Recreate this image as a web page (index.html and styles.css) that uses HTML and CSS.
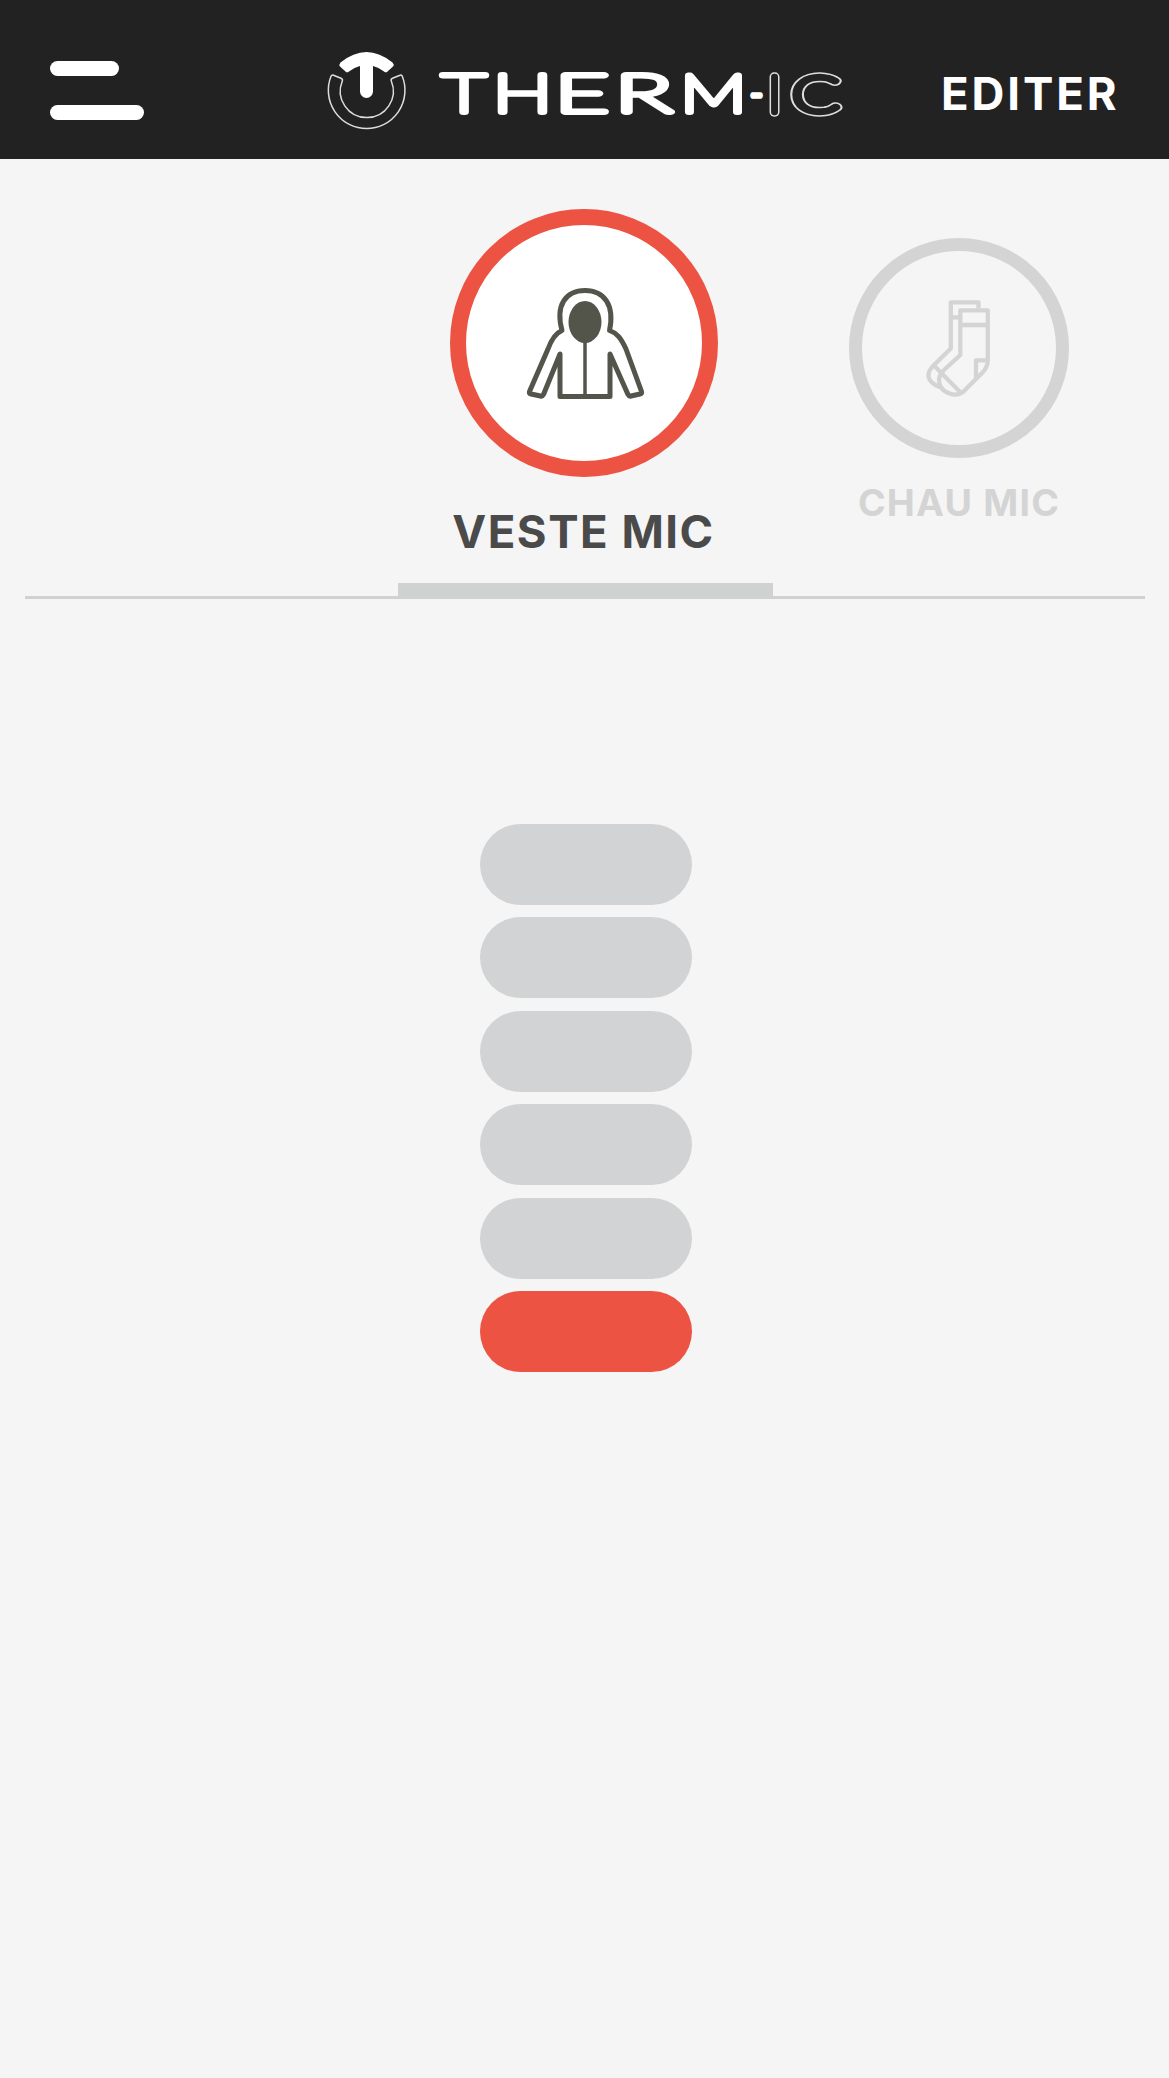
FILE: index.html
```html
<!DOCTYPE html>
<html lang="fr">
<head>
<meta charset="utf-8">
<title>Therm-ic</title>
<link rel="stylesheet" href="styles.css">
</head>
<body>
<header class="topbar">
  <button class="menu" aria-label="Menu"><span class="menu-line short"></span><span class="menu-line"></span></button>
  <svg class="logo" viewBox="320 40 530 100" role="img" aria-label="Therm-ic">
    <path class="emblem-fill" d="M340.5 62.500Q366.500 41.500 392.500 62.500Q394.500 64.500 393 66.500L387.500 71.500Q386 73.200 384 71.500Q379 67.500 373 66V91.500A6.500 6.500 0 0 1 360 91.500V66Q354 67.500 349 71.500Q347 73.200 345.500 71.500L340 66.500Q338.700 64.500 340.500 62.500Z"/>
    <path class="emblem-line" d="M331 76.300Q331.800 74.600 333.500 75.300L341 78.300Q343 79.200 342.300 81A26.500 26.500 0 1 0 391.300 81Q390.500 79.200 392.500 78.300L400 75.300Q401.600 74.600 402.300 76.300A38.300 38.300 0 1 1 331 76.300Z"/>
    <g class="word">
      <text x="442" y="112.300" textLength="44" lengthAdjust="spacingAndGlyphs">T</text>
      <text x="493" y="112.300" textLength="59" lengthAdjust="spacingAndGlyphs">H</text>
      <text x="555" y="112.300" textLength="54" lengthAdjust="spacingAndGlyphs">E</text>
      <text x="615" y="112.300" textLength="57" lengthAdjust="spacingAndGlyphs">R</text>
      <text x="680.500" y="112.300" textLength="66" lengthAdjust="spacingAndGlyphs">M</text>
      <text x="749.500" y="111" textLength="14" lengthAdjust="spacingAndGlyphs">-</text>
    </g>
    <g class="word outer">
      <g id="ic">
        <text x="768.500" y="111.500">I</text>
        <text x="792" y="111.500" textLength="47" lengthAdjust="spacingAndGlyphs">C</text>
      </g>
    </g>
    <use class="word inner" href="#ic"/>
  </svg>
  <a class="edit">EDITER</a>
</header>
<nav class="devices">
  <div class="device active">
    <div class="ring">
      <svg viewBox="450 209 268 268" class="jacket">
        <path d="M562 330.500C555 305 566 290.500 585 290.500S615 305 609.500 330.500C617 333 621 338 626 349L641.500 391.500Q642 393.500 640 394L631 396Q629 396.500 628 394.500L610 354V396.500H560V354L543.500 394.500Q542.500 396.500 540.500 396L531 394Q529 393.500 529.500 391.500L548 349C552 338 556 333 562 330.500Z"/>
        <path class="zip" d="M585 340V396"/>
        <ellipse cx="585" cy="322" rx="16.500" ry="21"/>
      </svg>
    </div>
    <span class="label">VESTE MIC</span>
  </div>
  <div class="device">
    <div class="ring">
      <svg viewBox="848.500 237.500 220 220" class="socks">
        <path d="M978 308V301.800H950.300V348L933 365C925 373 926 381 939 386.500M950.300 316.800H960"/>
        <path d="M959.800 309.800H987.300V360Q987 367 982 372L963 391C954 398 938 391.500 938.500 379Q939 374 943.500 369.500L959.800 354.500ZM959.800 324.500H987M987 359.800H975.500V378M932.500 364L961 393"/>
      </svg>
    </div>
    <span class="label">CHAU MIC</span>
  </div>
</nav>
<div class="track"><div class="thumb"></div></div>
<main class="levels">
  <span class="level"></span><span class="level"></span><span class="level"></span><span class="level"></span><span class="level"></span><span class="level on"></span>
</main>
</body>
</html>
```
FILE: styles.css
```css
* { box-sizing: border-box; }
body { margin: 0; min-height: 2078px; background: #f5f5f5; font-family: Inter, "Liberation Sans", sans-serif; font-weight: 700; }
.topbar { display: flex; height: 159px; background: #222; padding: 40px 50px 0; }
.menu { width: 94px; height: 59px; margin-top: 21px; padding: 0; border: 0; background: none; display: flex; flex-direction: column; justify-content: space-between; align-items: flex-start; flex: none; }
.menu-line { width: 94px; height: 15px; border-radius: 8px; background: #fff; }
.menu-line.short { width: 69px; }
.logo { width: 530px; height: 100px; margin-left: 176px; flex: none; }
.emblem-fill { fill: #fff; }
.emblem-line { fill: none; stroke: #ddd; stroke-width: 1.5; }
.word { font-family: Lato, sans-serif; font-size: 52px; font-weight: 100; fill: #fff; stroke: #fff; stroke-width: 5.8px; stroke-linejoin: round; }
.word.outer { font-size: 49.5px; fill: #ddd; stroke: #ddd; stroke-width: 9.3px; }
.word.inner { font-size: 49.5px; fill: #222; stroke: #222; stroke-width: 6.3px; }
.edit { margin: 24px 0 0 91px; color: #fff; font-size: 45.5px; line-height: 59px; letter-spacing: 2.9px; white-space: nowrap; }
.devices { display: grid; grid-template-columns: 398px 373px 376px; height: 424px; }
.device { display: flex; flex-direction: column; align-items: center; grid-column: 3; grid-row: 1; padding-top: 79px; color: #d3d4d3; }
.device.active { grid-column: 2; padding-top: 50px; margin-left: -1px; margin-right: 1px; color: #4a4a4a; }
.ring { width: 220px; height: 220px; border-radius: 50%; border: 13px solid #d3d4d3; flex: none; }
.active .ring { width: 268px; height: 268px; border: 16px solid #ec5342; background: #fff; }
.ring svg { display: block; width: 220px; height: 220px; margin: -13px; fill: none; stroke: #d3d4d3; stroke-width: 4.3; stroke-linejoin: round; }
.active .ring svg { width: 268px; height: 268px; margin: -16px; stroke: #53544a; stroke-width: 5; }
.jacket ellipse { fill: #53544a; stroke: none; }
.jacket .zip { stroke-width: 3.5; }
.label { margin-top: 20px; font-size: 37.5px; line-height: 50px; letter-spacing: 1.2px; white-space: nowrap; }
.active .label { margin-top: 26px; font-size: 45.5px; line-height: 58px; letter-spacing: 1.5px; }
.track { height: 16px; margin: 0 24px 0 25px; border-bottom: 3px solid #d0d2d2; }
.thumb { width: 375px; height: 13px; margin-left: 373px; background: #d0d2d2; }
.levels { display: flex; flex-direction: column; align-items: center; gap: 12.4px; padding: 225px 0 0 2px; }
.level { width: 212px; height: 81px; border-radius: 41px; background: #d1d3d4; }
.level.on { background: #ec5342; }
```
